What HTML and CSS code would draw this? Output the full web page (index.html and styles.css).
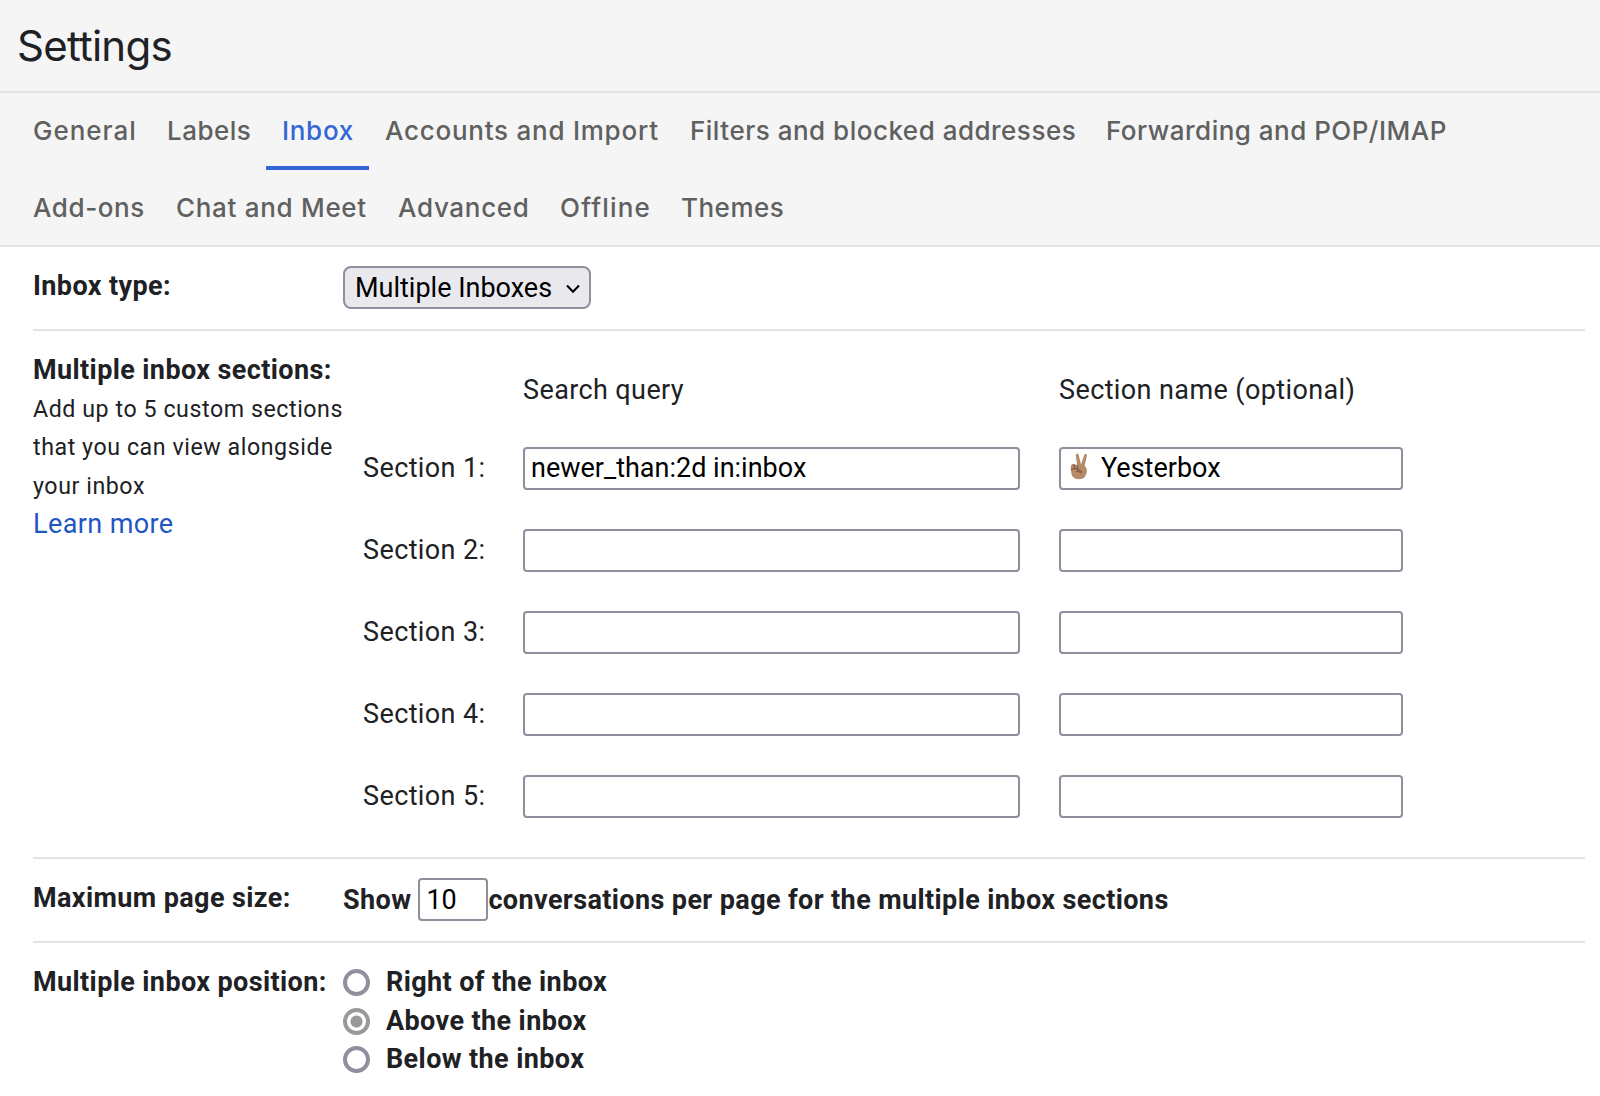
FILE: index.html
```html
<!DOCTYPE html>
<html lang="en">
<head>
    <meta charset="UTF-8">
    <meta name="viewport" content="width=device-width, initial-scale=1.0">
    <title>Settings</title>
    <link rel="stylesheet" href="styles.css">
</head>
<body>
    <header class="settings-header">
        <h1 class="page-title">Settings</h1>
        <nav class="tabs">
            <div class="tab-row">
                <a class="tab tab-general">General</a>
                <a class="tab tab-labels">Labels</a>
                <a class="tab tab-inbox active">Inbox</a>
                <a class="tab tab-accounts">Accounts and Import</a>
                <a class="tab tab-filters">Filters and blocked addresses</a>
                <a class="tab tab-forwarding">Forwarding and POP/IMAP</a>
            </div>
            <div class="tab-row">
                <a class="tab tab-addons">Add-ons</a>
                <a class="tab tab-chat">Chat and Meet</a>
                <a class="tab tab-advanced">Advanced</a>
                <a class="tab tab-offline">Offline</a>
                <a class="tab tab-themes">Themes</a>
            </div>
        </nav>
    </header>

    <main class="settings">
        <section class="setting setting-type">
            <div class="setting-label">Inbox type:</div>
            <div class="select-wrap">
                <select class="select">
                    <option>Multiple Inboxes</option>
                </select>
                <svg class="chevron" viewBox="0 0 14 10"><path d="M1 1.5 L7 7.7 L13 1.5" fill="none" stroke="#000" stroke-width="2"/></svg>
            </div>
        </section>

        <section class="setting setting-sections">
            <div class="setting-label">
                Multiple inbox sections:
                <p class="hint">Add up to 5 custom sections<br>that you can view alongside<br>your inbox</p>
                <a class="learn-more">Learn more</a>
            </div>
            <div class="section-grid">
                <span class="col-head col-query">Search query</span>
                <span class="col-head col-name">Section name (optional)</span>

                <span>Section 1:</span>
                <input class="field" type="text" value="newer_than:2d in:inbox">
                <div class="col-name emoji-field">
                    <input class="field" type="text" value="Yesterbox">
                    <svg class="hand" viewBox="0 0 18 27">
                        <path d="M7.2 13 L5.8 2.2 Q5.9 .5 7.2 .5 Q8.4 .6 8.8 2.2 L11 11.5 L14.3 1.8 Q15 .5 16.1 .9 Q17.3 1.4 16.9 2.8 L14.6 13 Q17.6 15 16.7 19.5 Q15.5 26.3 9.2 26.3 Q3.2 26.3 1.6 21.5 L.7 15.5 Q.5 12 2.5 11.1 Q4 10.4 5.1 11.6 Q6 11.2 7.2 13Z" fill="#b58a69"/>
                        <path d="M3.9 11.7 L4.7 15.8 M7.1 12.5 L8 15.7 M1.4 16.5 Q5.2 14.5 7.7 16.6 L11.6 18.5 M6.4 18.5 Q9 18.2 11 20" fill="none" stroke="#7c553e" stroke-width="1.1" stroke-linecap="round"/>
                    </svg>
                </div>

                <span>Section 2:</span>
                <input class="field" type="text">
                <input class="field col-name" type="text">

                <span>Section 3:</span>
                <input class="field" type="text">
                <input class="field col-name" type="text">

                <span>Section 4:</span>
                <input class="field" type="text">
                <input class="field col-name" type="text">

                <span>Section 5:</span>
                <input class="field" type="text">
                <input class="field col-name" type="text">
            </div>
        </section>

        <section class="setting setting-size">
            <div class="setting-label">Maximum page size:</div>
            <div class="page-size">
                <span>Show</span>
                <input class="field size-field" type="text" value="10">
                <span>conversations per page for the multiple inbox sections</span>
            </div>
        </section>

        <section class="setting setting-position">
            <div class="setting-label">Multiple inbox position:</div>
            <div class="radio-list">
                <label class="radio"><span class="radio-dot"></span>Right of the inbox</label>
                <label class="radio"><span class="radio-dot checked"></span>Above the inbox</label>
                <label class="radio"><span class="radio-dot"></span>Below the inbox</label>
            </div>
        </section>
    </main>
</body>
</html>
```
FILE: styles.css
```css
* { box-sizing: border-box; }
body { margin: 0; background-color: #fff; color: #202124; font-family: Roboto, Arial, sans-serif; font-size: 27px; line-height: 38.6px; letter-spacing: 0.39px; overflow: hidden; }

.settings-header { background-color: #f5f5f5; border-bottom: 2px solid #e1e3e3; height: 247px; }
.page-title { margin: 0; height: 93px; padding: 18px 0 0 17px; border-bottom: 2px solid #e1e1e1; font-family: Inter, sans-serif; font-size: 42px; font-weight: 400; line-height: 56px; letter-spacing: -0.75px; }
.tabs { padding-left: 17px; }
.tab-row { display: flex; height: 77px; }
.tab { flex: none; height: 77px; padding: 0 0 0 16px; font-family: Inter, sans-serif; font-size: 26px; font-weight: 500; line-height: 76px; color: #5f6060; white-space: nowrap; letter-spacing: 0.6px; }
.tab.active { color: #3367d6; border-bottom: 4px solid #3367d6; }
.tab-general { width: 134px; letter-spacing: 1px; }
.tab-labels { width: 115px; letter-spacing: 0.5px; }
.tab-inbox { width: 103px; letter-spacing: 0.7px; }
.tab-accounts { width: 305px; letter-spacing: 0.75px; }
.tab-filters { width: 416px; letter-spacing: 0.5px; }
.tab-forwarding { letter-spacing: 0.48px; }
.tab-addons { width: 143px; }
.tab-chat { width: 222px; letter-spacing: 0.7px; }
.tab-advanced { width: 162px; letter-spacing: 0.7px; }
.tab-offline { width: 122px; letter-spacing: 1.2px; }
.tab-themes { padding-left: 15px; letter-spacing: 0.5px; }

.settings { padding: 0 15px 0 33px; }
.setting { display: grid; grid-template-columns: 310px 1fr; border-bottom: 2px solid #e3e3e3; padding-top: 19px; }
.setting-label { padding-top: 1px; font-weight: 700; white-space: nowrap; }
.setting-type { height: 84px; }
.setting-sections { height: 528px; }
.setting-size { height: 84px; }
.setting-position { border-bottom: none; }
.hint { margin: 0; font-size: 23.2px; font-weight: 400; letter-spacing: 0.56px; }
.learn-more { font-weight: 400; color: #1f56c4; }

.select-wrap { position: relative; width: 248px; height: 43px; }
.select { appearance: none; width: 248px; height: 43px; padding: 0 0 0 10px; border: 2px solid #8f8f9d; border-radius: 8px; background-color: #e9e9ed; color: #000; font-family: inherit; font-size: 27px; }
.chevron { position: absolute; right: 11px; top: 18px; width: 14px; height: 10px; }

.section-grid { display: grid; grid-template-columns: 160px 497px 383px; grid-template-rows: 78px repeat(5, 82px); padding-left: 20px; align-content: start; align-items: center; margin-top: -1px; }
.section-grid span { padding-top: 1px; }
.section-grid .col-head { padding-top: 4px; }
.section-grid .col-query { grid-column: 2; }
.section-grid .col-name { width: 344px; margin-left: 39px; }
.field { width: 100%; height: 43px; padding: 0 0 0 6px; border: 2px solid #8f8f9d; border-radius: 4px; background-color: #fff; color: #000; font-family: inherit; font-size: 27px; }
.emoji-field { position: relative; height: 43px; }
.emoji-field .field { display: block; padding-left: 40px; }
.hand { position: absolute; left: 11px; top: 6px; width: 18px; height: 27px; }

.page-size { display: flex; align-items: center; height: 43px; font-weight: 700; }
.page-size span { padding-top: 2px; }
.size-field { width: 70px; margin-left: 7px; padding-top: 1px; }

.radio-list { padding-top: 1px; }
.radio { display: flex; align-items: center; font-weight: 700; }
.radio-dot { width: 27px; height: 27px; margin: 1px 16px 0 0; border: 4px solid #8f8f9d; border-radius: 50%; }
.radio-dot.checked { border-color: #999; background: radial-gradient(circle, #999 5.5px, #fff 6.5px); }
```
